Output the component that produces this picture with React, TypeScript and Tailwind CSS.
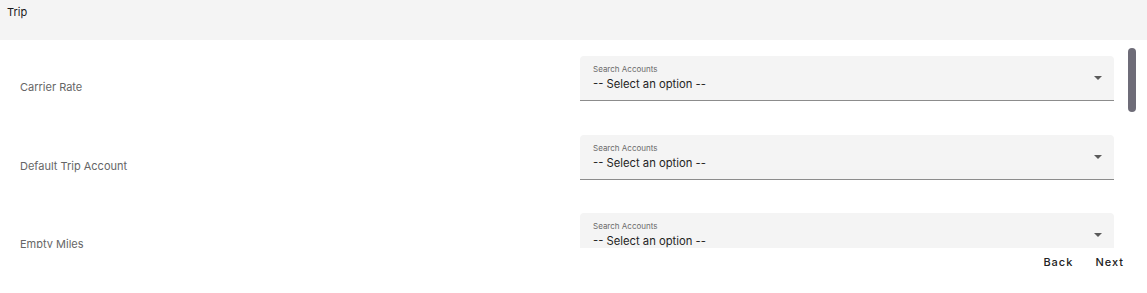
import React from 'react';

const rows = ['Carrier Rate', 'Default Trip Account', 'Empty Miles'];

function AccountSelect() {
  return (
    <div className="relative h-[45px] rounded-t-[4px] border-b border-[#8c8c8c] bg-[#f4f4f4] pl-[13px] pr-3">
      <div className="pt-[8px] text-[8px] leading-[10px] text-[#6b6b6b]">Search Accounts</div>
      <div className="mt-[3px] text-[11.25px] leading-[15px] text-[#1f1f1f]">-- Select an option --</div>
      <div className="absolute right-[12px] top-[20px] h-0 w-0 border-x-[4px] border-t-[4px] border-x-transparent border-t-[#5a5a5a]" />
    </div>
  );
}

export default function App() {
  return (
    <div className="h-[293px] w-full bg-white font-['Inter','Liberation_Sans',sans-serif]">
      {/* header */}
      <div className="h-[40px] bg-[#f4f4f4] px-[7px] pt-[5px] text-[11px] leading-[14px] text-[#1a1a1a]">Trip</div>

      {/* scroll area */}
      <div className="relative h-[208px] overflow-hidden">
        <div className="flex flex-col gap-[33.5px] pl-[20px] pr-[33px] pt-[16px]">
          {rows.map((label) => (
            <div key={label} className="flex items-start">
              <div className="w-[560px] pt-[24px] text-[11px] leading-[14px] text-[#666]">{label}</div>
              <div className="flex-1">
                <AccountSelect />
              </div>
            </div>
          ))}
        </div>
        <div className="absolute right-[11px] top-[8px] h-[64px] w-[8px] rounded-full bg-[#6e6c78]" />
      </div>

      {/* footer */}
      <div className="flex justify-end gap-[22px] pr-[23px] pt-[7px] text-[11px] font-medium leading-[14px] tracking-[1px] text-[#222]">
        <button>Back</button>
        <button>Next</button>
      </div>
    </div>
  );
}
